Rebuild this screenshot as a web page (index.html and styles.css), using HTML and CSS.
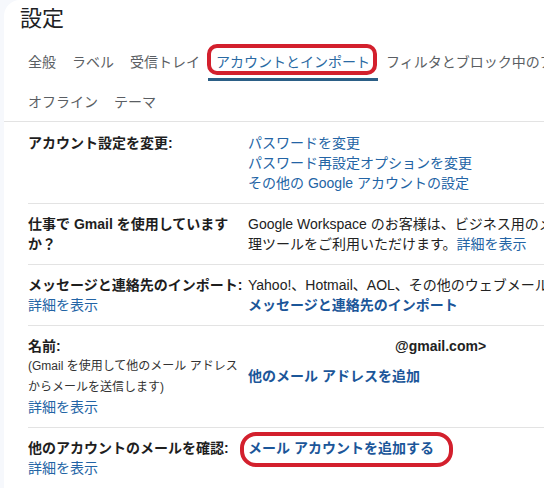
FILE: index.html
```html
<!DOCTYPE html>
<html lang="ja">
<head>
<meta charset="utf-8">
<title>設定</title>
<link rel="stylesheet" href="styles.css">
</head>
<body>
<div class="card">
  <h1 class="title">設定</h1>
  <nav class="tabs">
    <div class="tab-row">
      <span class="tab">全般</span>
      <span class="tab">ラベル</span>
      <span class="tab">受信トレイ</span>
      <span class="tab active">アカウントとインポート</span>
      <span class="tab">フィルタとブロック中のアドレス</span>
      <span class="tab">メール転送と POP/IMAP</span>
    </div>
    <div class="tab-row second">
      <span class="tab">オフライン</span>
      <span class="tab">テーマ</span>
    </div>
  </nav>
  <div class="rows">
    <div class="row first">
      <div class="label"><b>アカウント設定を変更:</b></div>
      <div class="value">
        <a class="link block">パスワードを変更</a>
        <a class="link block">パスワード再設定オプションを変更</a>
        <a class="link block">その他の Google アカウントの設定</a>
      </div>
    </div>
    <div class="row">
      <div class="label"><b>仕事で Gmail を使用しています<br>か？</b></div>
      <div class="value">Google Workspace のお客様は、ビジネス用のメール アドレス、ストレージ容量の追加、管<br>理ツールをご利用いただけます。<a class="link">詳細を表示</a></div>
    </div>
    <div class="row">
      <div class="label"><b>メッセージと連絡先のインポート:</b><br><a class="link">詳細を表示</a></div>
      <div class="value">Yahoo!、Hotmail、AOL、その他のウェブメールまたは POP3 アカウントからインポートします。<br><a class="link strong">メッセージと連絡先のインポート</a></div>
    </div>
    <div class="row">
      <div class="label">
        <b class="block">名前:</b>
        <span class="note">(Gmail を使用して他のメール アドレス<br>からメールを送信します)</span>
        <a class="link block">詳細を表示</a>
      </div>
      <div class="value">
        <div class="address">@gmail.com&gt;</div>
        <a class="link strong block add">他のメール アドレスを追加</a>
      </div>
    </div>
    <div class="row last">
      <div class="label"><b>他のアカウントのメールを確認:</b><br><a class="link">詳細を表示</a></div>
      <div class="value"><a class="link strong">メール アカウントを追加する</a></div>
    </div>
  </div>
</div>
<div class="mark mark-tab"></div>
<div class="mark mark-add"></div>
</body>
</html>
```

FILE: styles.css
```css
html, body {
  margin: 0;
  padding: 0;
  overflow: hidden;
}
body {
  background: #f6f8fc;
  padding-left: 4px;
  font-family: "Liberation Sans", "Noto Sans CJK JP", sans-serif;
  font-size: 14px;
  line-height: 20px;
  color: #222;
  position: relative;
  height: 488px;
}
.card {
  background: #fff;
  border-top-left-radius: 16px;
  min-height: 488px;
}
.title {
  margin: 0;
  padding: 5px 0 0 16px;
  font-size: 22px;
  line-height: 28px;
  font-weight: normal;
  color: #202124;
}
.tabs {
  border-bottom: 1px solid #e3e3e3;
  padding-left: 16px;
}
.tab-row {
  display: flex;
  white-space: nowrap;
  padding-top: 19px;
}
.tab-row.second {
  padding-top: 11px;
}
.tab {
  padding: 0 8px 6px;
  border-bottom: 3px solid transparent;
  color: #5a5e63;
  flex: none;
}
.tab.active {
  color: #2a6aa3;
  border-bottom-color: #2b5f86;
}
.rows {
  padding-left: 24px;
}
.row {
  display: grid;
  grid-template-columns: 220px 1fr;
  padding: 10px 0;
  border-bottom: 1px solid #e3e3e3;
}
.row.first {
  padding-top: 11px;
}
.row.last {
  border-bottom: none;
}
.label, .value {
  white-space: nowrap;
}
.label b {
  font-weight: bold;
  color: #1e1e1e;
}
.note {
  display: block;
  font-size: 12px;
  line-height: 20.5px;
  color: #333;
}
.link {
  color: #2364a5;
  text-decoration: none;
}
.link.strong {
  font-weight: bold;
  color: #1b5699;
}
.block {
  display: block;
}
.address {
  padding-left: 147px;
  font-weight: bold;
  color: #222;
}
.add {
  margin-top: 10px;
}
.mark {
  position: absolute;
  box-sizing: border-box;
  border: 4px solid #d3202d;
}
.mark-tab {
  left: 207px;
  top: 44px;
  width: 170px;
  height: 31px;
  border-radius: 10px;
}
.mark-add {
  left: 240px;
  top: 432px;
  width: 213px;
  height: 35px;
  border-radius: 16px;
}
```
